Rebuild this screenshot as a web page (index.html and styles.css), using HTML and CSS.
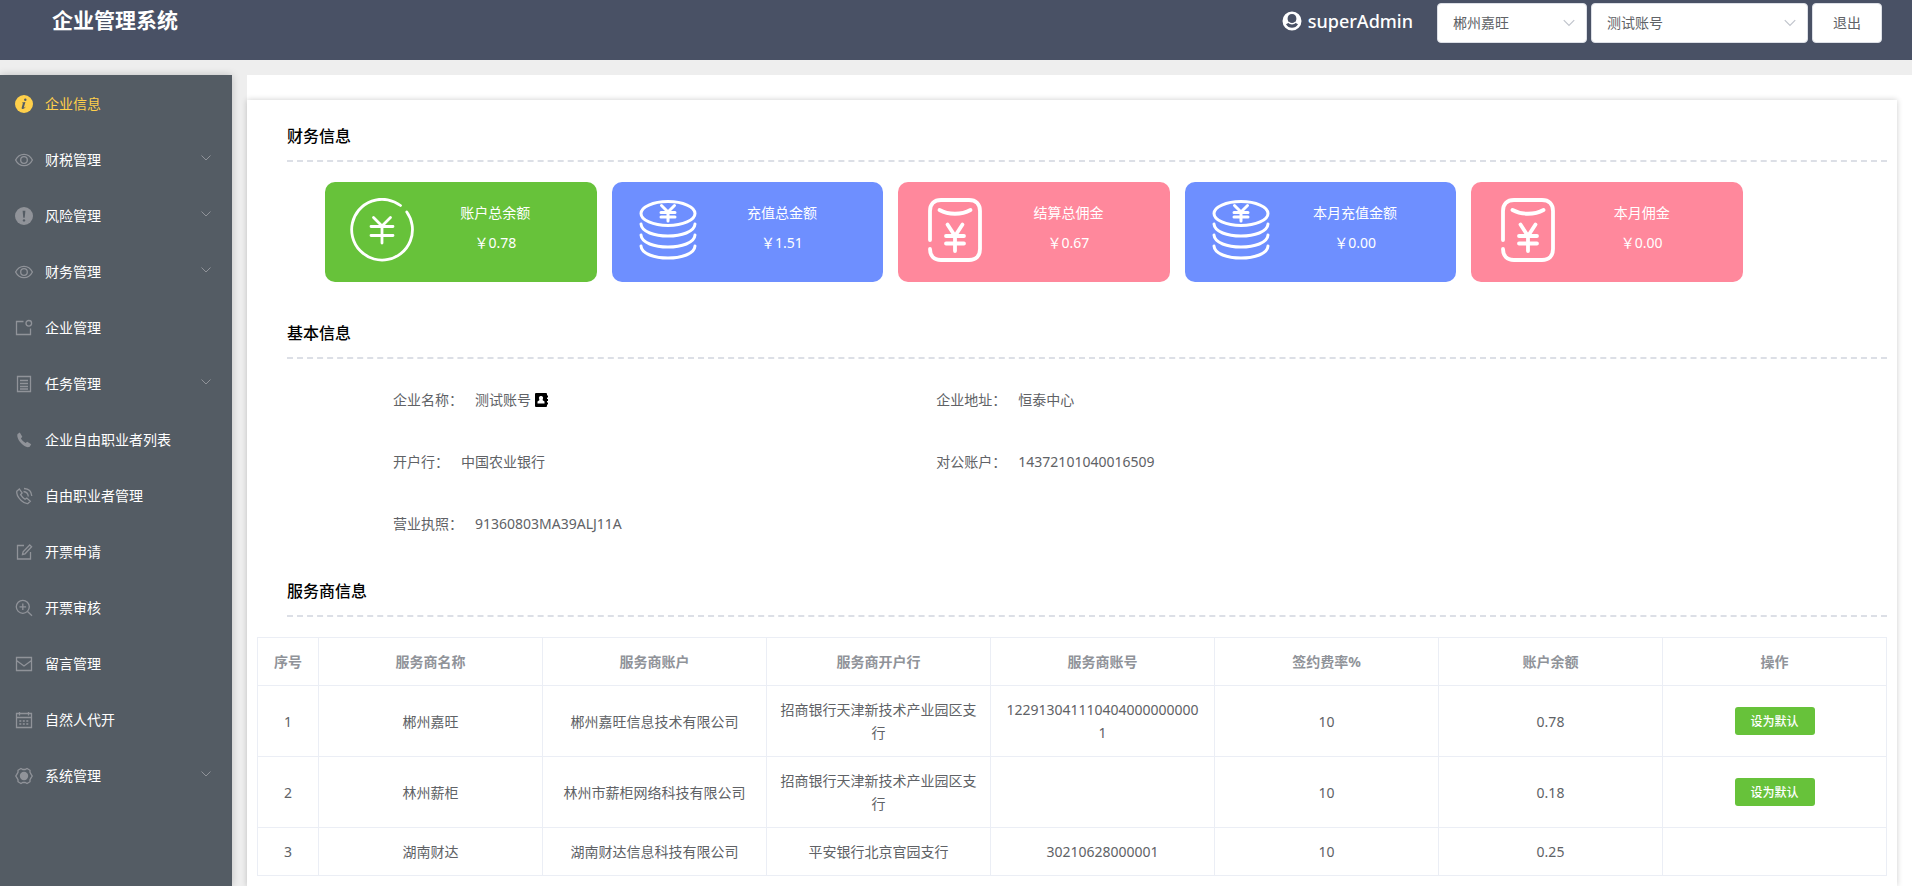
FILE: index.html
```html
<!DOCTYPE html>
<html lang="zh-CN">
<head>
<meta charset="utf-8">
<title>企业管理系统</title>
<link rel="stylesheet" href="styles.css">
</head>
<body>
<svg class="sprite" aria-hidden="true">
  <symbol id="i-info" viewBox="0 0 18 18"><circle cx="9" cy="9" r="9" fill="currentColor"/><g class="cut"><circle cx="10.3" cy="4.7" r="1.2"/><path d="M7.2 7.6l3.2-.6-1.5 5.2c-.2.8.2.8 1.3-.4l.3.3c-1.2 1.7-2.2 2.1-3 1.9-.9-.2-1-.9-.7-1.8l1-3.5c.2-.6 0-.8-.7-.7z"/></g></symbol>
  <symbol id="i-eye" viewBox="0 0 18 18"><g class="line"><path d="M.6 9C2.600 5 5.600 3.300 9 3.300S15.400 5 17.400 9C15.400 13 12.400 14.700 9 14.700S2.600 13 .6 9z"/><circle cx="9" cy="9" r="3.300"/></g></symbol>
  <symbol id="i-warn" viewBox="0 0 18 18"><circle cx="9" cy="9" r="9" fill="currentColor"/><g class="cut"><path d="M7.600 3.800h2.800l-.7 7h-1.400z"/><circle cx="9" cy="13.400" r="1.200"/></g></symbol>
  <symbol id="i-box" viewBox="0 0 18 18"><g class="line"><path d="M8.500 2.500H1.500v13h14V9.500"/><circle cx="13.800" cy="4.300" r="2.800"/></g></symbol>
  <symbol id="i-doc" viewBox="0 0 18 18"><g class="line"><path d="M2.500 1.500h13v15h-13zM5 5.500h8M5 8.500h8M5 11.500h8M5 14h8"/></g></symbol>
  <symbol id="i-phone" viewBox="0 0 18 18"><path fill="currentColor" d="M2.500 3L4.800 1.500 7.300 5.800 5.900 7.500c1 1.800 2.800 3.500 4.700 4.400l1.600-1.200 4 2.600-1.500 2.500c-1.500.8-4 .6-7.200-2.300C4 10.500 1.500 6 2.500 3z"/></symbol>
  <symbol id="i-call" viewBox="0 0 18 18"><g class="line"><path d="M1.800 4.200L4.300 2l2.800 4-1.500 1.700c1 1.700 2.600 3.400 4.400 4.500l1.800-1.100 3.500 3.200-2.300 2.200c-2 .3-4.500-.8-6.800-3C3.500 11 1.300 7 1.800 4.200zM8.500 4.500c2.800.2 4.500 2 4.800 5M9 1.500c4.500.2 7.500 3.200 7.800 7.500"/></g></symbol>
  <symbol id="i-edit" viewBox="0 0 18 18"><g class="line"><path d="M9 2.500H2.500v13.500h13V9M7.500 11.500l.6-2.800L14.700 2l1.900 1.800L10 10.800z"/></g></symbol>
  <symbol id="i-zoom" viewBox="0 0 18 18"><g class="line"><circle cx="7.800" cy="7.800" r="6.500"/><path d="M12.500 12.500l4.500 4.200M4.500 7.800h6.600M7.800 4.500v6.600"/></g></symbol>
  <symbol id="i-mail" viewBox="0 0 18 18"><g class="line"><path d="M1.500 2.500h15v13h-15zM1.500 5.500L9 11l7.500-5.500"/></g></symbol>
  <symbol id="i-date" viewBox="0 0 18 18"><g class="line"><path d="M1.500 2.500h15v14h-15zM1.500 6.500h15M4.500 1v3.500M13.500 1v3.500"/><path stroke-dasharray="2 1.500" d="M4.300 10h9.500M4.300 13h9.500"/></g></symbol>
  <symbol id="i-gear" viewBox="0 0 18 18"><g class="line"><path d="M6 1.500l1.800 1h2.400l1.800-1 3 1.800v2l1.200 2.100 1 1.600-1 1.600-1.200 2.100v2L12 16.500l-1.800-1H7.800l-1.800 1-3-1.800v-2l-1.200-2.100L.8 9l1-1.600L3 5.300v-2z"/></g><circle cx="9" cy="9" r="4.200" fill="currentColor"/></symbol>
  <symbol id="i-down" viewBox="0 0 12 12"><path class="thin" d="M1.500 3.500L6 8l4.500-4.500"/></symbol>
  <symbol id="i-yen" viewBox="0 0 64 64"><g class="pic" stroke-width="2.800"><path d="M50.500 7.500A30.400 30.400 0 1 0 56.800 14"/><path d="M23.500 19.500L32 28l8.500-8.500M32 28v17M21 28.500h22M21 37.500h22"/></g></symbol>
  <symbol id="i-coins" viewBox="0 0 64 64"><g class="pic" stroke-width="3"><ellipse cx="31" cy="15.500" rx="27" ry="12"/><path d="M4 26c1 16 53 16 54 0M4 37c1 16 53 16 54 0M4 48c1 16 53 16 54 0"/><path d="M24.500 7.500L31 14l6.500-6.500M31 14v9M24 14.500h14M24 19h14"/></g></symbol>
  <symbol id="i-bill" viewBox="0 0 64 64"><g class="pic" stroke-width="3.800"><path d="M7 42V13C7 6 11 2 18 2h28c7 0 11 4 11 11v38c0 7-4 11-11 11H18C11 62 7 58 7 51"/><path d="M16.500 12c9 5 22 5 31 0M24.500 26.500L32 38l7.500-11.500M32 37v16M23 38h18M23 45.500h18"/></g></symbol>
  <symbol id="i-user" viewBox="0 0 20 20"><path fill="currentColor" fill-rule="evenodd" d="M10 .5a9.500 9.500 0 1 0 0 19 9.500 9.500 0 0 0 0-19zM10 3c2.700 0 4.400 2 4.400 4.600 0 1.700-.7 3.100-1.600 4l3.200 1.600c-1.300 2.300-3.500 3.600-6 3.600s-4.700-1.300-6-3.600l3.200-1.600c-.9-.9-1.600-2.300-1.600-4C5.600 5 7.300 3 10 3z"/><path fill="none" stroke="currentColor" stroke-width="1.500" d="M6.500 11.300c2 1.800 5 1.800 7 0"/></symbol>
  <symbol id="i-book" viewBox="0 0 14 14"><path d="M2 0h10q1 0 1 1v1.500h1v2h-1v1.500h1v2h-1v1.500h1v2h-1V13q0 1-1 1H2q-1 0-1-1V1q0-1 1-1z"/><path fill="#fff" d="M7 3a2 2 0 0 1 1.700 3.200v1L10.500 8.500V10.500h-7V8.500L5.300 7.200v-1A2 2 0 0 1 7 3z"/></symbol>
</svg>

<header class="topbar">
  <h1 class="brand">企业管理系统</h1>
  <div class="tools">
    <span class="user"><svg class="user-icon"><use href="#i-user"/></svg>superAdmin</span>
    <span class="picker provider"><select aria-label="服务商"><option>郴州嘉旺</option></select><svg class="chevron"><use href="#i-down"/></svg></span>
    <span class="picker company"><select aria-label="企业"><option>测试账号</option></select><svg class="chevron"><use href="#i-down"/></svg></span>
    <button class="logout" type="button">退出</button>
  </div>
</header>

<div class="layout">
  <nav class="sidebar">
    <a class="item active" href="#"><svg class="icon"><use href="#i-info"/></svg>企业信息</a>
    <a class="item" href="#"><svg class="icon"><use href="#i-eye"/></svg>财税管理<svg class="arrow"><use href="#i-down"/></svg></a>
    <a class="item" href="#"><svg class="icon"><use href="#i-warn"/></svg>风险管理<svg class="arrow"><use href="#i-down"/></svg></a>
    <a class="item" href="#"><svg class="icon"><use href="#i-eye"/></svg>财务管理<svg class="arrow"><use href="#i-down"/></svg></a>
    <a class="item" href="#"><svg class="icon"><use href="#i-box"/></svg>企业管理</a>
    <a class="item" href="#"><svg class="icon"><use href="#i-doc"/></svg>任务管理<svg class="arrow"><use href="#i-down"/></svg></a>
    <a class="item" href="#"><svg class="icon"><use href="#i-phone"/></svg>企业自由职业者列表</a>
    <a class="item" href="#"><svg class="icon"><use href="#i-call"/></svg>自由职业者管理</a>
    <a class="item" href="#"><svg class="icon"><use href="#i-edit"/></svg>开票申请</a>
    <a class="item" href="#"><svg class="icon"><use href="#i-zoom"/></svg>开票审核</a>
    <a class="item" href="#"><svg class="icon"><use href="#i-mail"/></svg>留言管理</a>
    <a class="item" href="#"><svg class="icon"><use href="#i-date"/></svg>自然人代开</a>
    <a class="item" href="#"><svg class="icon"><use href="#i-gear"/></svg>系统管理<svg class="arrow"><use href="#i-down"/></svg></a>
  </nav>

  <main class="main">
    <div class="panel">
      <h2 class="section-title">财务信息</h2>
      <div class="stats">
        <div class="stat green"><svg class="stat-icon"><use href="#i-yen"/></svg><div class="stat-text"><span>账户总余额</span><span>￥0.78</span></div></div>
        <div class="stat blue"><svg class="stat-icon"><use href="#i-coins"/></svg><div class="stat-text"><span>充值总金额</span><span>￥1.51</span></div></div>
        <div class="stat pink"><svg class="stat-icon"><use href="#i-bill"/></svg><div class="stat-text"><span>结算总佣金</span><span>￥0.67</span></div></div>
        <div class="stat blue"><svg class="stat-icon"><use href="#i-coins"/></svg><div class="stat-text"><span>本月充值金额</span><span>￥0.00</span></div></div>
        <div class="stat pink"><svg class="stat-icon"><use href="#i-bill"/></svg><div class="stat-text"><span>本月佣金</span><span>￥0.00</span></div></div>
      </div>

      <h2 class="section-title">基本信息</h2>
      <dl class="info">
        <div class="field"><dt>企业名称：</dt><dd>测试账号<svg class="book"><use href="#i-book"/></svg></dd></div>
        <div class="field"><dt>企业地址：</dt><dd>恒泰中心</dd></div>
        <div class="field first"><dt>开户行：</dt><dd>中国农业银行</dd></div>
        <div class="field"><dt>对公账户：</dt><dd>14372101040016509</dd></div>
        <div class="field first"><dt>营业执照：</dt><dd>91360803MA39ALJ11A</dd></div>
      </dl>

      <h2 class="section-title">服务商信息</h2>
      <table class="grid">
        <thead>
          <tr><th class="index">序号</th><th>服务商名称</th><th>服务商账户</th><th>服务商开户行</th><th>服务商账号</th><th>签约费率%</th><th>账户余额</th><th>操作</th></tr>
        </thead>
        <tbody>
          <tr><td>1</td><td>郴州嘉旺</td><td>郴州嘉旺信息技术有限公司</td><td>招商银行天津新技术产业园区支行</td><td>1229130411104040000000001</td><td>10</td><td>0.78</td><td><button class="default" type="button">设为默认</button></td></tr>
          <tr><td>2</td><td>林州薪柜</td><td>林州市薪柜网络科技有限公司</td><td>招商银行天津新技术产业园区支行</td><td></td><td>10</td><td>0.18</td><td><button class="default" type="button">设为默认</button></td></tr>
          <tr><td>3</td><td>湖南财达</td><td>湖南财达信息科技有限公司</td><td>平安银行北京官园支行</td><td>30210628000001</td><td>10</td><td>0.25</td><td></td></tr>
        </tbody>
      </table>
    </div>
  </main>
</div>
</body>
</html>
```
FILE: styles.css
```css
* { box-sizing: border-box; }

body {
  margin: 0;
  min-height: 100vh;
  display: flex;
  flex-direction: column;
  background: #eee;
  color: #606266;
  font: 14px/23px "Noto Sans", "Noto Sans CJK SC", sans-serif;
}

button, select { font: inherit; }
h1, h2, dl, dd { margin: 0; }
svg { display: block; flex: none; }

.sprite { position: absolute; width: 0; height: 0; }
.line { fill: none; stroke: currentColor; stroke-width: 1.3; }
.thin { fill: none; stroke: currentColor; stroke-width: 1; }
.cut { fill: #545c64; }
.pic { fill: none; stroke: #fff; stroke-linecap: round; }

/* Top bar */
.topbar {
  display: flex;
  justify-content: space-between;
  align-items: flex-start;
  height: 60px;
  padding: 3px 30px 0 52px;
  background: #495165;
  color: #fff;
}
.brand { font-size: 21px; line-height: 34px; font-weight: 700; }
.tools { display: flex; align-items: flex-start; gap: 4px; }
.user {
  display: flex;
  align-items: center;
  gap: 6px;
  margin-right: 20px;
  font-size: 18px;
  line-height: 36px;
  font-weight: 500;
}
.user-icon { width: 20px; height: 20px; }
.picker { position: relative; display: block; }
.provider { width: 150px; }
.company { width: 217px; }
.picker select {
  appearance: none;
  display: block;
  width: 100%;
  height: 40px;
  padding: 0 30px 2px 15px;
  border: 1px solid #dcdfe6;
  border-radius: 4px;
  background: #fff;
  color: #606266;
}
.chevron {
  position: absolute;
  right: 11px;
  top: 13px;
  width: 14px;
  height: 14px;
  color: #c0c4cc;
  pointer-events: none;
}
.logout {
  width: 70px;
  height: 40px;
  padding: 0 0 2px;
  border: 1px solid #dcdfe6;
  border-radius: 4px;
  background: #fff;
  color: #606266;
}

/* Body layout */
.layout { flex: 1; display: flex; gap: 15px; padding-top: 15px; }
.sidebar {
  flex: none;
  width: 232px;
  background: #545c64;
  box-shadow: 0 0 8px rgba(0, 0, 0, .2);
}
.item {
  display: flex;
  align-items: center;
  height: 56px;
  padding: 0 20px 0 15px;
  color: #fff;
  text-decoration: none;
}
.item.active, .item.active .icon { color: #ffd04b; }
.icon { width: 18px; height: 18px; margin: 2px 12px 0 0; color: #909399; }
.arrow { width: 12px; height: 12px; margin: 0 0 2px auto; color: #909399; }

.main {
  flex: 1;
  min-width: 0;
  display: flex;
  padding: 25px 15px 0 0;
  background: #fff;
}
.panel {
  flex: 1;
  min-width: 0;
  padding: 10px;
  background: #fff;
  box-shadow: 0 0 6px rgba(0, 0, 0, .2);
}
.section-title {
  margin-left: 30px;
  padding-top: 2px;
  border-bottom: 2px dashed #dcdfe6;
  color: #000;
  font-size: 16px;
  line-height: 48px;
  font-weight: 500;
}

/* Finance cards */
.stats {
  display: grid;
  grid-template-columns: repeat(5, 1fr);
  gap: 15px;
  margin: 20px 144px 25px 68px;
}
.stat {
  display: flex;
  align-items: center;
  height: 100px;
  padding: 0 20px 4px 25px;
  border-radius: 10px;
  color: #fff;
}
.green { background: #67c23a; }
.blue { background: #6e8fff; }
.pink { background: #ff889c; }
.stat-icon { width: 64px; height: 64px; }
.stat-text {
  flex: 1;
  display: flex;
  flex-direction: column;
  padding-bottom: 4px;
  text-align: center;
  line-height: 30px;
}

/* Company details */
.info { display: grid; grid-template-columns: repeat(3, 1fr); margin: 10px 0; }
.field {
  display: flex;
  gap: 12px;
  padding-left: 136px;
  line-height: 62px;
}
.first { grid-column: 1; }
.field dd { display: flex; align-items: center; gap: 3px; }
.book { width: 14px; height: 14px; }

/* Provider table */
.grid {
  width: 100%;
  margin-top: 20px;
  table-layout: fixed;
  border-collapse: collapse;
  text-align: center;
}
.grid th, .grid td {
  padding: 12px;
  border: 1px solid #ebeef5;
  word-break: break-all;
}
.grid th { color: #909399; font-weight: 700; }
.grid .index { width: 61px; }
.default {
  display: block;
  width: 80px;
  height: 28px;
  margin: 0 auto;
  padding: 0;
  border: 0;
  border-radius: 3px;
  background: #67c23a;
  color: #fff;
  font-size: 12px;
  font-weight: 500;
}
```
